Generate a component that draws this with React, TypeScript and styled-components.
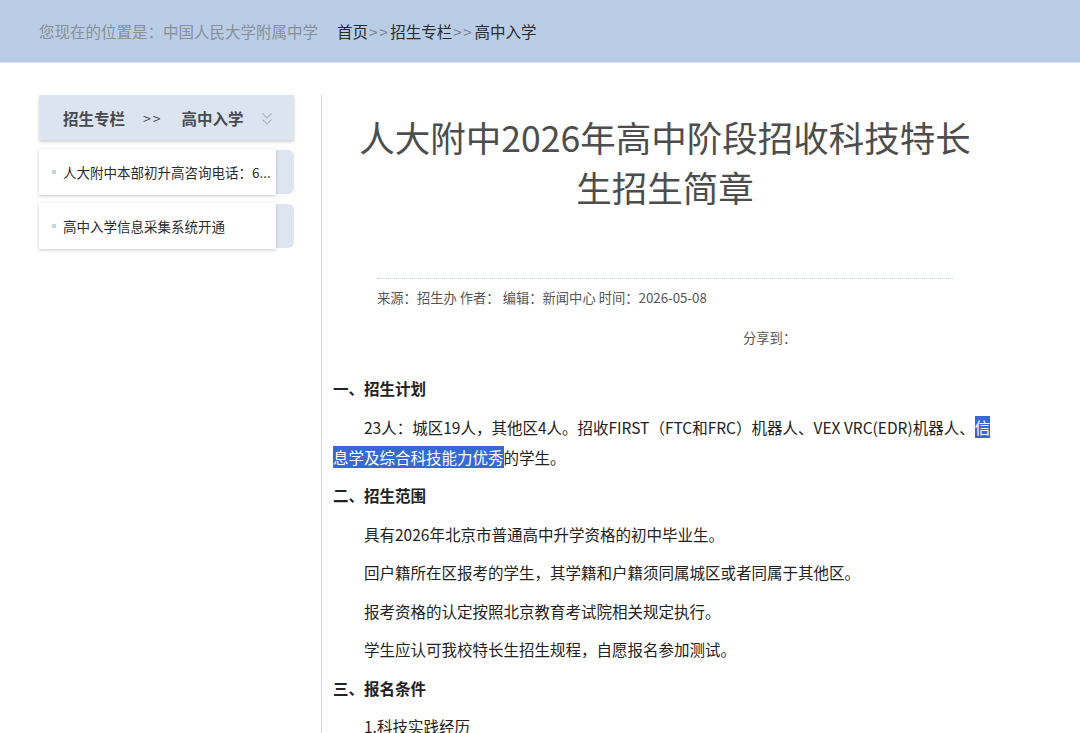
import { FC } from 'react';
import styled, { createGlobalStyle } from 'styled-components';

const GlobalStyle = createGlobalStyle`
  html, body {
    margin: 0;
    padding: 0;
    background: #ffffff;
    font-family: "Noto Sans CJK SC", "Noto Sans", sans-serif;
  }
`;

type SideItem = { title: string };

const sideItems: SideItem[] = [
  { title: '人大附中本部初升高咨询电话：6...' },
  { title: '高中入学信息采集系统开通' },
];

const App: FC = () => {
  return (
    <>
      <GlobalStyle />
      <TopBar>
        <Location>您现在的位置是：中国人民大学附属中学</Location>
        <Crumbs>
          首页<Sep>&gt;&gt;</Sep>招生专栏<Sep>&gt;&gt;</Sep>高中入学
        </Crumbs>
      </TopBar>
      <Main>
        <Sidebar>
          <SideHeader>
            <span>招生专栏</span>
            <HeaderSep>&gt;&gt;</HeaderSep>
            <span>高中入学</span>
            <Chevron viewBox="0 0 12 14" width="12" height="14">
              <path d="M1.5 1.5 L6 6 L10.5 1.5 M1.5 7.5 L6 12 L10.5 7.5" fill="none" stroke="#b0b6bf" strokeWidth="1.1" />
            </Chevron>
          </SideHeader>
          {sideItems.map((item) => (
            <SideRow key={item.title}>
              <SideCard>
                <Bullet />
                <SideText>{item.title}</SideText>
              </SideCard>
              <SideTab />
            </SideRow>
          ))}
        </Sidebar>
        <Content>
          <Title>人大附中2026年高中阶段招收科技特长生招生简章</Title>
          <Meta>
            <MetaLine>来源：招生办 作者： 编辑：新闻中心 时间：2026-05-08</MetaLine>
            <Share>分享到：</Share>
          </Meta>
          <Article>
            <Heading>一、招生计划</Heading>
            <Para>
              23人：城区19人，其他区4人。招收FIRST（FTC和FRC）机器人、VEX VRC(EDR)机器人、
              <Selected>信息学及综合科技能力优秀</Selected>的学生。
            </Para>
            <Heading>二、招生范围</Heading>
            <Para>具有2026年北京市普通高中升学资格的初中毕业生。</Para>
            <Para>回户籍所在区报考的学生，其学籍和户籍须同属城区或者同属于其他区。</Para>
            <Para>报考资格的认定按照北京教育考试院相关规定执行。</Para>
            <Para>学生应认可我校特长生招生规程，自愿报名参加测试。</Para>
            <Heading>三、报名条件</Heading>
            <Para>1.科技实践经历</Para>
          </Article>
        </Content>
      </Main>
    </>
  );
};

export default App;

const TopBar = styled.div`
  height: 62px;
  background: #b9cde6;
  border-bottom: 1px solid #d6e2f1;
  display: flex;
  align-items: center;
  padding-left: 39px;
  font-size: 15.5px;
`;

const Location = styled.span`
  color: #8a8f96;
  margin-right: 19px;
`;

const Crumbs = styled.span`
  color: #2a2a2a;
`;

const Sep = styled.span`
  color: #7d838b;
  letter-spacing: 1.5px;
  margin: 0 1px;
`;

const Main = styled.div`
  display: flex;
  align-items: flex-start;
  padding: 32px 0 0 39px;
`;

const Sidebar = styled.div`
  width: 255px;
  flex-shrink: 0;
  display: flex;
  flex-direction: column;
  gap: 8px;
`;

const SideHeader = styled.div`
  height: 45px;
  background: #dbe4f0;
  box-shadow: 0 2px 3px rgba(0, 0, 0, 0.18);
  display: flex;
  align-items: center;
  padding-left: 24px;
  font-size: 15.5px;
  font-weight: 700;
  color: #474a4f;
  margin-bottom: 1px;
`;

const HeaderSep = styled.span`
  font-weight: 400;
  font-size: 14px;
  margin: 0 19px 0 18px;
  letter-spacing: 2px;
`;

const Chevron = styled.svg`
  margin-left: 17px;
  margin-top: 3px;
`;

const SideRow = styled.div`
  display: flex;
  align-items: center;
`;

const SideCard = styled.div`
  width: 237px;
  height: 46px;
  background: #ffffff;
  box-shadow: 0 1px 3px rgba(0, 0, 0, 0.22);
  display: flex;
  align-items: center;
  padding-left: 13px;
  box-sizing: border-box;
  position: relative;
  z-index: 1;
`;

const Bullet = styled.span`
  width: 4px;
  height: 4px;
  background: #c9d4e3;
  margin-right: 7px;
  flex-shrink: 0;
`;

const SideText = styled.span`
  font-size: 13.5px;
  color: #2b2b2b;
  white-space: nowrap;
`;

const SideTab = styled.div`
  width: 18px;
  height: 44px;
  background: #dde5f1;
  border-radius: 0 6px 6px 0;
`;

const Content = styled.div`
  margin-left: 27px;
  border-left: 1px solid #c9d7ea;
  padding-left: 11px;
  width: 664px;
  min-height: 640px;
`;

const Title = styled.h1`
  margin: 17px auto 0;
  width: 622px;
  text-align: center;
  font-size: 35.5px;
  line-height: 50px;
  font-weight: 400;
  color: #4d4d4d;
`;

const Meta = styled.div`
  margin: 66px 44px 0;
  border-top: 1px dotted #c5cfdc;
`;

const MetaLine = styled.div`
  margin-top: 9px;
  font-size: 13.3px;
  line-height: 20px;
  color: #555;
`;

const Share = styled.div`
  margin: 20px 0 0 366px;
  font-size: 13.3px;
  line-height: 20px;
  color: #555;
`;

const Article = styled.div`
  margin-top: 25px;
  color: #222;
  font-size: 15.5px;
`;

const Heading = styled.p`
  margin: 0 0 8.5px;
  line-height: 30px;
  font-weight: 700;
`;

const Para = styled.p`
  margin: 0 0 8.5px;
  line-height: 30px;
  text-indent: 2em;
`;

const Selected = styled.span`
  background: #3669d4;
  color: #ffffff;
`;
